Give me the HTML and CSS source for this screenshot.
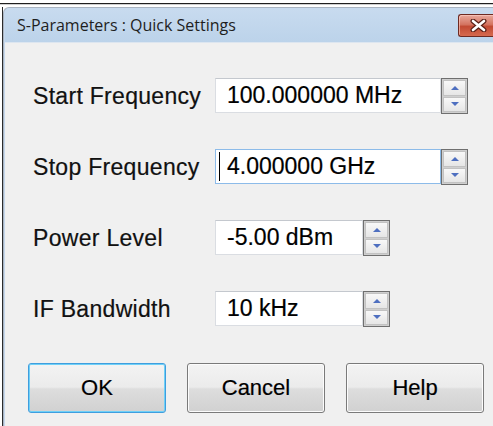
FILE: index.html
```html
<!DOCTYPE html>
<html lang="en">
<head>
<meta charset="utf-8">
<title>S-Parameters : Quick Settings</title>
<link rel="stylesheet" href="styles.css">
</head>
<body>
<div class="desk"><div class="desk-rule"></div></div>
<div class="window">
  <div class="frame">
    <div class="titlebar">
      <span class="title">S-Parameters : Quick Settings</span>
      <button class="close" type="button" aria-label="Close">
        <svg width="17" height="13" viewBox="0 0 17 13">
          <path d="M3 2 L14 11 M14 2 L3 11" stroke="#5a2118" stroke-width="5" stroke-linecap="round"/>
          <path d="M3 2 L14 11 M14 2 L3 11" stroke="#ffffff" stroke-width="2.6" stroke-linecap="round"/>
        </svg>
      </button>
    </div>
    <div class="client">
      <div class="form">
        <label class="label">Start Frequency</label>
        <div class="field">
          <div class="edit wide">100.000000 MHz</div>
          <div class="spin"><span class="spin-btn up"></span><span class="spin-btn down"></span></div>
        </div>

        <label class="label">Stop Frequency</label>
        <div class="field">
          <div class="edit wide focused"><span class="caret"></span>4.000000 GHz</div>
          <div class="spin"><span class="spin-btn up"></span><span class="spin-btn down"></span></div>
        </div>

        <label class="label">Power Level</label>
        <div class="field">
          <div class="edit narrow">-5.00 dBm</div>
          <div class="spin"><span class="spin-btn up"></span><span class="spin-btn down"></span></div>
        </div>

        <label class="label">IF Bandwidth</label>
        <div class="field">
          <div class="edit narrow">10 kHz</div>
          <div class="spin"><span class="spin-btn up"></span><span class="spin-btn down"></span></div>
        </div>
      </div>
      <div class="buttons">
        <button class="btn default" type="button">OK</button>
        <button class="btn" type="button">Cancel</button>
        <button class="btn" type="button">Help</button>
      </div>
    </div>
  </div>
</div>
</body>
</html>
```
FILE: styles.css
```css
html, body {
  margin: 0;
  padding: 0;
}
body {
  width: 493px;
  height: 426px;
  overflow: hidden;
  background: #ffffff;
  font-family: "Liberation Sans", Arial, sans-serif;
  color: #000;
}

/* strip of the parent window above the dialog */
.desk {
  height: 7px;
  box-sizing: border-box;
  padding-top: 3px;
}
.desk-rule {
  height: 1px;
  background: #1f1f1f;
  border-bottom: 1px solid #cfcfcf;
}

.window {
  margin-left: 2px;
  border-left: 1px solid #2b2b2b;
  height: 419px;
}
.frame {
  height: 100%;
  box-sizing: border-box;
  border-top: 1px solid #a9b4c2;
  border-left: 1px solid #a9b4c2;
  border-top-left-radius: 6px;
  background: #c6d8ec;
  padding-left: 1px;
  display: flex;
  flex-direction: column;
}

.titlebar {
  height: 34px;
  display: flex;
  align-items: flex-start;
  justify-content: space-between;
  background: linear-gradient(#c8dbef, #bcd3ea);
  border-top-left-radius: 5px;
}
.title {
  font-family: "Open Sans", "DejaVu Sans", sans-serif;
  font-size: 16px;
  color: #1e1e1e;
  padding-left: 12px;
  padding-top: 7px;
  line-height: 20px;
}
/* the close box runs off the right edge, so only its left part shows */
.close {
  margin-top: 6px;
  width: 35px;
  height: 23px;
  padding: 0 0 0 5px;
  border: 1px solid #6e2a22;
  border-right: none;
  border-radius: 3px 0 0 3px;
  background: linear-gradient(#e9a99d 0%, #d47461 45%, #c24a33 55%, #d66a4f 100%);
  box-shadow: inset 1px 1px 0 rgba(255, 210, 200, 0.6);
  display: flex;
  align-items: center;
  justify-content: center;
}
.close svg { display: block; }

.client {
  flex: 1;
  background: #f0f0f0;
  border-top: 1px solid #dde6f0;
  padding: 35px 0 0 23px;
}

.form {
  display: grid;
  grid-template-columns: 187px auto;
  grid-auto-rows: 36px;
  row-gap: 35px;
  align-items: center;
}
.label {
  padding-left: 5px;
  font-size: 23px;
  letter-spacing: 0.3px;
  color: #111;
  line-height: 36px;
  -webkit-text-stroke: 0.2px #111;
}
.field {
  display: flex;
  align-items: flex-start;
  height: 36px;
}
.edit {
  height: 35px;
  box-sizing: border-box;
  background: #fff;
  border: 1px solid #dadde2;
  border-top-color: #c4c8ce;
  font-size: 23px;
  line-height: 33px;
  padding-left: 11px;
  white-space: nowrap;
  display: flex;
  align-items: center;
  -webkit-text-stroke: 0.2px #000;
}
.edit.wide { width: 226px; }
.edit.narrow { width: 148px; }
.edit.focused {
  border-color: #8cbbe9;
  padding-left: 3px;
}
.caret {
  display: inline-block;
  width: 1px;
  height: 29px;
  background: #000;
  margin-right: 7px;
}

.spin {
  width: 27px;
  height: 36px;
  box-sizing: border-box;
  border: 1px solid #6f6f6f;
  background: #cfcfcf;
  padding: 1px;
  display: flex;
  flex-direction: column;
  gap: 1px;
}
.spin-btn {
  flex: 1;
  border: 1px solid #c2c2c2;
  background: linear-gradient(#f8f8f8, #e6e6e6);
  display: flex;
  align-items: center;
  justify-content: center;
}
.spin-btn::before {
  content: "";
  width: 0;
  height: 0;
  border-left: 4px solid transparent;
  border-right: 4px solid transparent;
}
.spin-btn.up::before { border-bottom: 4px solid #4e6fc0; }
.spin-btn.down::before { border-top: 4px solid #4e6fc0; }

.buttons {
  display: flex;
  gap: 21px;
  margin-top: 36px;
}
.btn {
  width: 138px;
  height: 50px;
  padding: 0;
  border: 1px solid #7a7a7a;
  border-radius: 3px;
  background: linear-gradient(#f3f3f3 0%, #ebebeb 48%, #dddddd 52%, #d1d1d1 100%);
  box-shadow: inset 0 0 0 1px #fcfcfc;
  font-family: "Liberation Sans", Arial, sans-serif;
  font-size: 22px;
  color: #000;
  -webkit-text-stroke: 0.2px #000;
}
.btn.default {
  border-color: #3f9ede;
  box-shadow: inset 0 0 0 1px #6fd0f7;
}
```
